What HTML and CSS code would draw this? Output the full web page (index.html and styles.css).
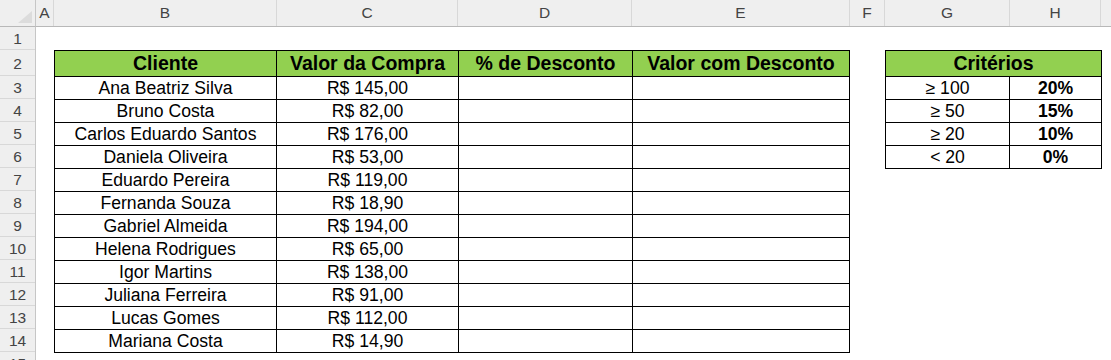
FILE: index.html
```html
<!DOCTYPE html>
<html lang="pt-BR">
<head>
<meta charset="utf-8">
<title>Planilha</title>
<link rel="stylesheet" href="styles.css">
</head>
<body>
<div class="sheet">
  <div class="corner"><span class="tri"></span></div>
  <div class="colheads">
    <div class="ch w-a">A</div>
    <div class="ch w-b">B</div>
    <div class="ch w-c">C</div>
    <div class="ch w-d">D</div>
    <div class="ch w-e">E</div>
    <div class="ch w-f">F</div>
    <div class="ch w-g">G</div>
    <div class="ch w-h">H</div>
    <div class="ch w-i"></div>
  </div>
  <div class="rowheads">
    <div class="rh">1</div>
    <div class="rh tall">2</div>
    <div class="rh">3</div>
    <div class="rh">4</div>
    <div class="rh">5</div>
    <div class="rh">6</div>
    <div class="rh">7</div>
    <div class="rh">8</div>
    <div class="rh">9</div>
    <div class="rh">10</div>
    <div class="rh">11</div>
    <div class="rh">12</div>
    <div class="rh">13</div>
    <div class="rh">14</div>
    <div class="rh">15</div>
  </div>
  <div class="body">
    <div class="tbl main">
      <div class="cell hd">Cliente</div>
      <div class="cell hd">Valor da Compra</div>
      <div class="cell hd">% de Desconto</div>
      <div class="cell hd">Valor com Desconto</div>

      <div class="cell">Ana Beatriz Silva</div><div class="cell">R$ 145,00</div><div class="cell"></div><div class="cell"></div>
      <div class="cell">Bruno Costa</div><div class="cell">R$ 82,00</div><div class="cell"></div><div class="cell"></div>
      <div class="cell">Carlos Eduardo Santos</div><div class="cell">R$ 176,00</div><div class="cell"></div><div class="cell"></div>
      <div class="cell">Daniela Oliveira</div><div class="cell">R$ 53,00</div><div class="cell"></div><div class="cell"></div>
      <div class="cell">Eduardo Pereira</div><div class="cell">R$ 119,00</div><div class="cell"></div><div class="cell"></div>
      <div class="cell">Fernanda Souza</div><div class="cell">R$ 18,90</div><div class="cell"></div><div class="cell"></div>
      <div class="cell">Gabriel Almeida</div><div class="cell">R$ 194,00</div><div class="cell"></div><div class="cell"></div>
      <div class="cell">Helena Rodrigues</div><div class="cell">R$ 65,00</div><div class="cell"></div><div class="cell"></div>
      <div class="cell">Igor Martins</div><div class="cell">R$ 138,00</div><div class="cell"></div><div class="cell"></div>
      <div class="cell">Juliana Ferreira</div><div class="cell">R$ 91,00</div><div class="cell"></div><div class="cell"></div>
      <div class="cell">Lucas Gomes</div><div class="cell">R$ 112,00</div><div class="cell"></div><div class="cell"></div>
      <div class="cell">Mariana Costa</div><div class="cell">R$ 14,90</div><div class="cell"></div><div class="cell"></div>
    </div>
    <div class="tbl crit">
      <div class="cell hd span2">Critérios</div>
      <div class="cell">≥ 100</div><div class="cell b">20%</div>
      <div class="cell">≥ 50</div><div class="cell b">15%</div>
      <div class="cell">≥ 20</div><div class="cell b">10%</div>
      <div class="cell">&lt; 20</div><div class="cell b">0%</div>
    </div>
  </div>
</div>
</body>
</html>
```
FILE: styles.css
```css
html, body {
  margin: 0;
  padding: 0;
  background: #ffffff;
  overflow: hidden;
}
body {
  font-family: "Liberation Sans", Arial, sans-serif;
  color: #000;
}
.sheet {
  display: grid;
  grid-template-columns: 36px 1fr;
  grid-template-rows: 27px 1fr;
  width: 1111px;
  height: 360px;
}
.corner {
  background: #efefef;
  border-right: 1px solid #c6c6c6;
  border-bottom: 1px solid #b8b8b8;
  box-sizing: border-box;
  position: relative;
}
.tri {
  position: absolute;
  right: 3px;
  bottom: 3px;
  width: 0;
  height: 0;
  border-left: 14px solid transparent;
  border-bottom: 12px solid #dcdcdc;
}
.colheads {
  display: flex;
  background: #efefef;
  border-bottom: 1px solid #b8b8b8;
  box-sizing: border-box;
}
.ch {
  box-sizing: border-box;
  border-right: 1px solid #d8d8d8;
  font-size: 15.5px;
  color: #444;
  text-align: center;
  line-height: 26px;
  flex: none;
}
.w-a { width: 18px; }
.w-b { width: 223px; }
.w-c { width: 181px; }
.w-d { width: 174px; }
.w-e { width: 218px; }
.w-f { width: 35px; }
.w-g { width: 125px; }
.w-h { width: 91px; }
.w-i { flex: 1; border-right: none; }
.rowheads {
  display: flex;
  flex-direction: column;
  background: #efefef;
  border-right: 1px solid #c6c6c6;
  box-sizing: border-box;
}
.rh {
  height: 23px;
  box-sizing: border-box;
  border-bottom: 1px solid #d8d8d8;
  font-size: 15.5px;
  color: #444;
  text-align: center;
  line-height: 23px;
  flex: none;
}
.rh.tall { height: 26px; line-height: 27px; }
.body {
  display: flex;
  align-items: flex-start;
  padding: 23px 0 0 18px;
  gap: 35px;
}
.tbl {
  display: grid;
  border-top: 1px solid #000;
  border-left: 1px solid #000;
}
.main { grid-template-columns: 222px 182px 174px 217px; }
.crit { grid-template-columns: 124px 92px; }
.cell {
  box-sizing: border-box;
  height: 23px;
  border-right: 1px solid #000;
  border-bottom: 1px solid #000;
  font-size: 17.6px;
  line-height: 22px;
  text-align: center;
  white-space: nowrap;
  overflow: hidden;
}
.cell.hd {
  height: 26px;
  line-height: 25px;
  background: #92d050;
  font-weight: bold;
  font-size: 19.5px;
}
.cell.span2 { grid-column: span 2; }
.cell.b { font-weight: bold; }
```
